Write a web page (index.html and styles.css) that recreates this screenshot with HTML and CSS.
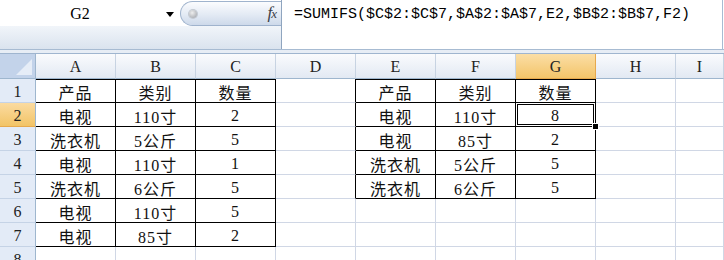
FILE: index.html
```html
<!DOCTYPE html>
<html>
<head>
<meta charset="utf-8">
<link rel="stylesheet" href="styles.css">
</head>
<body>
<div class="app">
  <div class="fbar">
    <div class="fleft">
      <div class="ftop">
        <div class="namebox"><span class="ref">G2</span><span class="arrow"></span></div>
        <div class="pill"><span class="dot"></span><span class="fx"><i>f</i><i class="fxx">x</i></span></div>
      </div>
      <div class="flower"></div>
    </div>
    <div class="formula">=SUMIFS($C$2:$C$7,$A$2:$A$7,E2,$B$2:$B$7,F2)</div>
  </div>
  <div class="gap"></div>
  <div class="sheet">
    <div class="corner"><span class="tri"></span></div>
    <div class="ch">A</div><div class="ch">B</div><div class="ch">C</div><div class="ch">D</div><div class="ch">E</div><div class="ch">F</div><div class="ch sel">G</div><div class="ch">H</div><div class="ch">I</div>

    <div class="rh">1</div>
    <div class="c t top">产品</div><div class="c t top">类别</div><div class="c t top">数量</div><div class="c tl"></div>
    <div class="c t top">产品</div><div class="c t top">类别</div><div class="c t top">数量</div><div class="c"></div><div class="c"></div>

    <div class="rh sel">2</div>
    <div class="c t">电视</div><div class="c t">110寸</div><div class="c t">2</div><div class="c tl"></div>
    <div class="c t">电视</div><div class="c t">110寸</div><div class="c t active">8<span class="handle"></span></div><div class="c"></div><div class="c"></div>

    <div class="rh">3</div>
    <div class="c t">洗衣机</div><div class="c t">5公斤</div><div class="c t">5</div><div class="c tl"></div>
    <div class="c t">电视</div><div class="c t">85寸</div><div class="c t">2</div><div class="c"></div><div class="c"></div>

    <div class="rh">4</div>
    <div class="c t">电视</div><div class="c t">110寸</div><div class="c t">1</div><div class="c tl"></div>
    <div class="c t">洗衣机</div><div class="c t">5公斤</div><div class="c t">5</div><div class="c"></div><div class="c"></div>

    <div class="rh">5</div>
    <div class="c t">洗衣机</div><div class="c t">6公斤</div><div class="c t">5</div><div class="c tl"></div>
    <div class="c t">洗衣机</div><div class="c t">6公斤</div><div class="c t">5</div><div class="c"></div><div class="c"></div>

    <div class="rh">6</div>
    <div class="c t">电视</div><div class="c t">110寸</div><div class="c t">5</div><div class="c"></div>
    <div class="c"></div><div class="c"></div><div class="c"></div><div class="c"></div><div class="c"></div>

    <div class="rh">7</div>
    <div class="c t">电视</div><div class="c t">85寸</div><div class="c t">2</div><div class="c"></div>
    <div class="c"></div><div class="c"></div><div class="c"></div><div class="c"></div><div class="c"></div>

    <div class="rh">8</div>
    <div class="c"></div><div class="c"></div><div class="c"></div><div class="c"></div>
    <div class="c"></div><div class="c"></div><div class="c"></div><div class="c"></div><div class="c"></div>
  </div>
</div>
</body>
</html>
```

FILE: styles.css
```css
* { box-sizing: border-box; }
html, body {
  margin: 0;
  padding: 0;
  width: 724px;
  height: 260px;
  overflow: hidden;
  background: #fff;
}
.app {
  width: 724px;
  height: 260px;
  overflow: hidden;
  font-family: "Liberation Serif", "Noto Sans CJK SC", serif;
  color: #000;
}

/* formula bar */
.fbar {
  display: flex;
  height: 50px;
  border-bottom: 1px solid #a7bbd2;
}
.fleft {
  width: 281px;
  display: flex;
  flex-direction: column;
}
.ftop {
  height: 26px;
  display: flex;
  background: #fff;
}
.namebox {
  width: 180px;
  display: flex;
  align-items: center;
}
.ref {
  width: 160px;
  text-align: center;
  font-size: 16px;
  padding-top: 1px;
}
.arrow {
  width: 0;
  height: 0;
  border-left: 4px solid transparent;
  border-right: 4px solid transparent;
  border-top: 5px solid #000;
  margin-left: 6px;
  margin-top: 2px;
}
.pill {
  width: 101px;
  height: 25px;
  margin-top: 1px;
  border: 1px solid #9fb3cd;
  border-right: none;
  border-radius: 13px 0 0 13px;
  background: linear-gradient(#fbfcfe, #e3eaf4 55%, #cdd9ea);
  display: flex;
  align-items: center;
  justify-content: space-between;
  padding: 0 4px 0 8px;
}
.dot {
  width: 8px;
  height: 8px;
  border-radius: 50%;
  background: radial-gradient(circle at 40% 35%, #eeeeee, #9a9ea5);
  box-shadow: 0 0 0 1px #c3c9d2;
}
.fx {
  font-family: "Liberation Serif", serif;
  font-size: 17px;
  color: #3c4148;
  margin-bottom: 1px;
}
.fxx { font-size: 13px; margin-left: -1px; }
.flower {
  flex: 1;
  background: linear-gradient(#f1f5fa, #dae3ee);
}
.formula {
  flex: 1;
  border-left: 1px solid #8fa5bf;
  border-right: 1px solid #a7bbd2;
  margin-right: 1px;
  background: #fff;
  font-family: "Liberation Mono", monospace;
  font-size: 15px;
  padding: 6px 0 0 12px;
  white-space: nowrap;
  color: #000;
}
.gap {
  height: 3px;
  background: #e7edf5;
}

/* sheet */
.sheet {
  display: grid;
  grid-template-columns: 36px repeat(8, 80px) 1fr;
  grid-template-rows: 25px repeat(8, 24px);
  border-top: 1px solid #9fb5cf;
}
.corner {
  position: relative;
  background: #c3d3ea;
  border-right: 1px solid #9eb6ce;
  border-bottom: 1px solid #9eb6ce;
}
.tri {
  position: absolute;
  right: 3px;
  bottom: 3px;
  width: 0;
  height: 0;
  border-left: 16px solid transparent;
  border-bottom: 16px solid #e6edf7;
}
.ch {
  background: linear-gradient(#fafbfd, #e2e9f3);
  border-right: 1px solid #c7d3e2;
  border-bottom: 1px solid #9eb6ce;
  display: flex;
  align-items: center;
  justify-content: center;
  font-size: 16px;
  color: #222;
  padding-top: 2px;
}
.ch.sel {
  background: linear-gradient(#fbdea6, #f3c56a);
  border-right-color: #e6a94d;
  border-bottom-color: #e6a94d;
}
.rh {
  background: #e3ebf7;
  border-right: 1px solid #9eb6ce;
  border-bottom: 1px solid #c5d3e6;
  display: flex;
  align-items: center;
  justify-content: center;
  font-size: 16px;
  color: #222;
  padding-top: 2px;
}
.rh.sel {
  background: linear-gradient(#fbdba0, #f2c467);
  border-bottom-color: #e6a94d;
}
.c {
  position: relative;
  border-right: 1px solid #d0d7e5;
  border-bottom: 1px solid #d0d7e5;
  display: flex;
  align-items: center;
  justify-content: center;
  font-size: 16px;
  letter-spacing: 1px;
  padding-top: 3px;
  color: #111;
}
.c.t {
  border-right-color: #000;
  border-bottom-color: #000;
}
.c.tl { border-right-color: #000; }
.c.top { box-shadow: inset 0 1px 0 #000; }
.c.active {
  box-shadow: inset 0 0 0 1px #fff, inset 0 0 0 2px #000;
}
.handle {
  position: absolute;
  right: -4px;
  bottom: -4px;
  width: 7px;
  height: 7px;
  background: #000;
  border: 1px solid #fff;
  z-index: 2;
}
```
